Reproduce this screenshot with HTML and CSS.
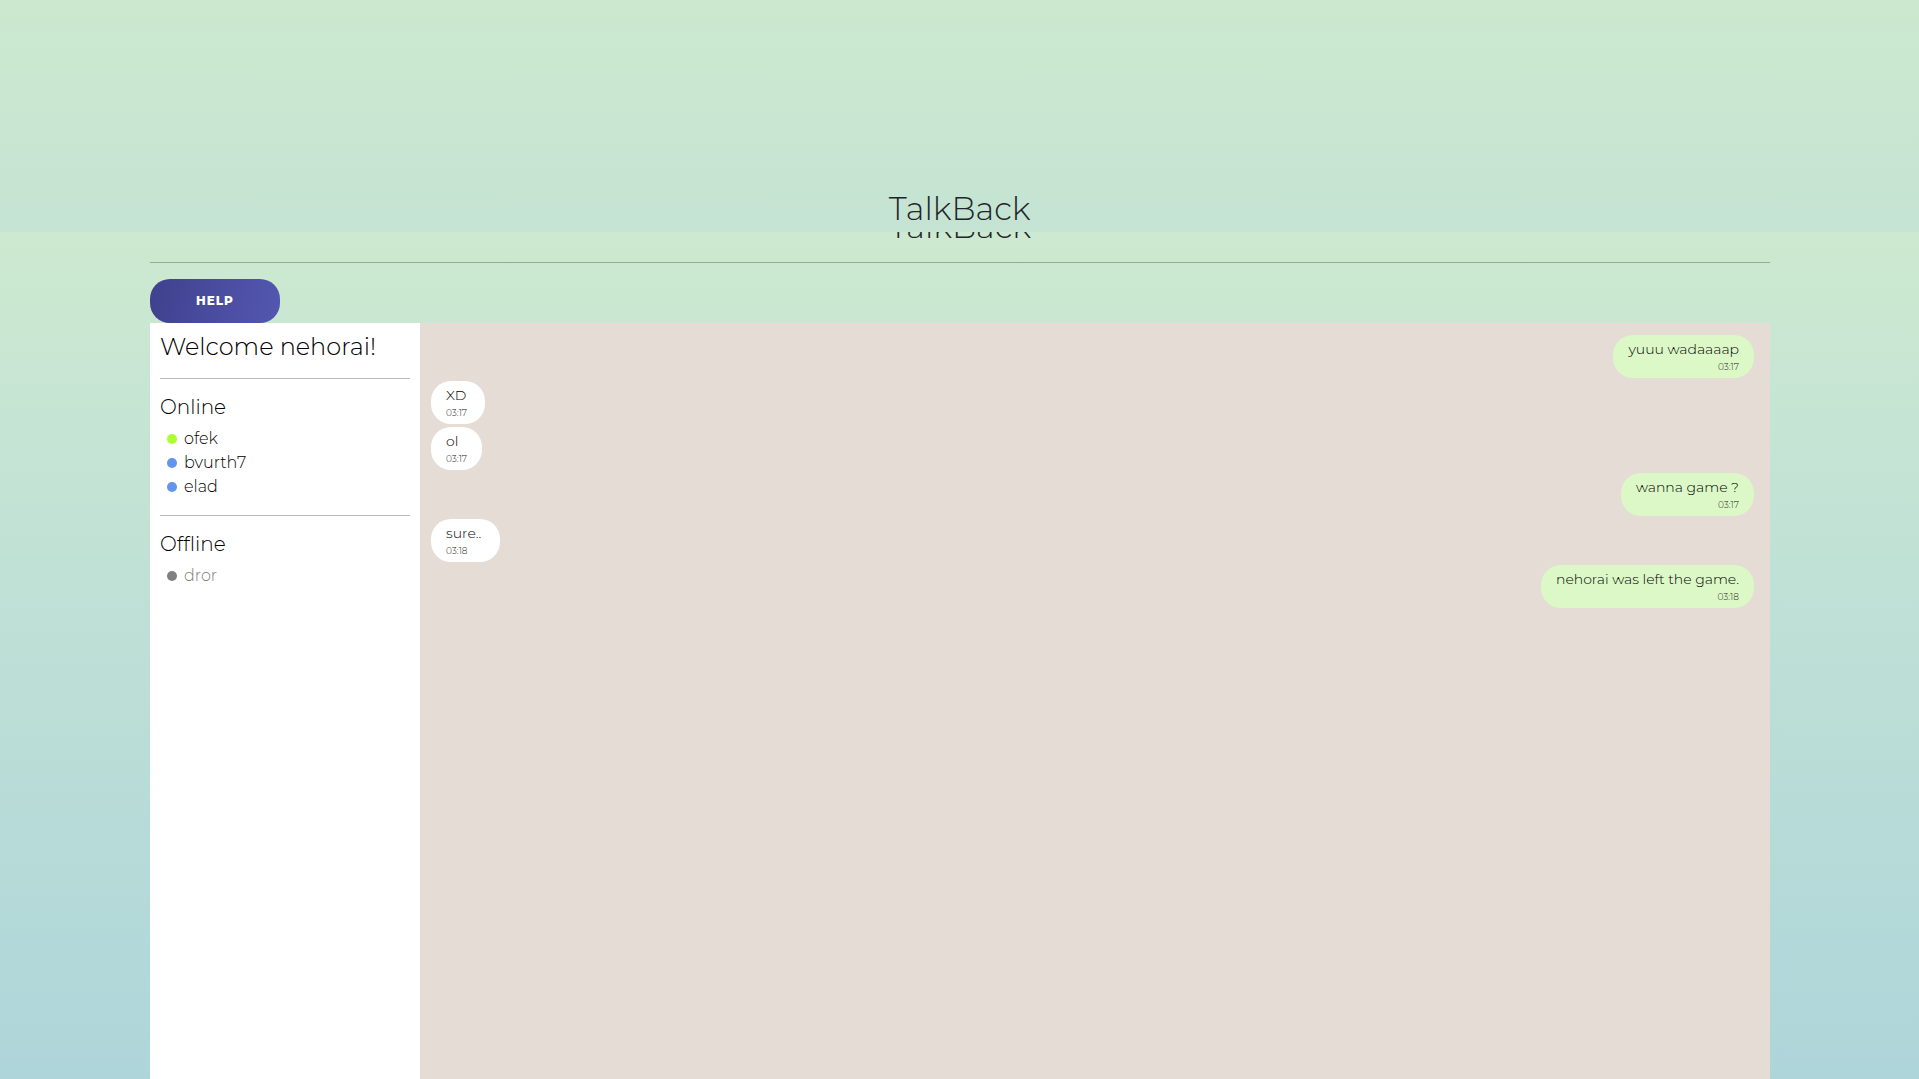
FILE: index.html
```html
<!DOCTYPE html>
<html lang="en">
<head>
<meta charset="utf-8">
<meta name="viewport" content="width=device-width, initial-scale=1">
<title>TalkBack</title>
<link rel="stylesheet" href="styles.css">
</head>
<body>
<header class="banner"><h1 class="title">TalkBack</h1></header>
<main class="page">
  <div class="title-echo" aria-hidden="true"><span class="title">TalkBack</span></div>
  <hr class="rule">
  <button class="help" type="button">Help</button>
  <div class="app">
    <aside class="sidebar">
      <h2 class="welcome">Welcome nehorai!</h2>
      <hr class="rule">
      <section>
        <h3 class="group">Online</h3>
        <ul class="users">
          <li class="user user-active">ofek</li>
          <li class="user">bvurth7</li>
          <li class="user">elad</li>
        </ul>
      </section>
      <hr class="rule">
      <section>
        <h3 class="group">Offline</h3>
        <ul class="users">
          <li class="user user-offline">dror</li>
        </ul>
      </section>
    </aside>
    <section class="chat" aria-label="Messages">
      <div class="message sent"><p class="text">yuuu wadaaaap</p><time class="time">03:17</time></div>
      <div class="message"><p class="text">XD</p><time class="time">03:17</time></div>
      <div class="message"><p class="text">ol</p><time class="time">03:17</time></div>
      <div class="message sent"><p class="text">wanna game ?</p><time class="time">03:17</time></div>
      <div class="message"><p class="text">sure..</p><time class="time">03:18</time></div>
      <div class="message sent"><p class="text">nehorai was left the game.</p><time class="time">03:18</time></div>
    </section>
  </div>
</main>
</body>
</html>
```

FILE: styles.css
```css
* { box-sizing: border-box; }

body {
  margin: 0;
  min-height: 100vh;
  display: flex;
  flex-direction: column;
  font-family: Montserrat, Inter, sans-serif;
  font-weight: 350;
  color: #000;
}

h1, h2, h3, p, ul { margin: 0; padding: 0; font-weight: inherit; }

.banner {
  display: flex;
  justify-content: center;
  padding: 190px 0 4px;
  background: linear-gradient(#cce9cf, #c5e3d3);
}

.title {
  font-size: 32px;
  line-height: 38px;
  color: #212529;
}

.page {
  flex: 1;
  display: flex;
  flex-direction: column;
  padding: 0 149px 0 150px;
  background: linear-gradient(#cde9cf, #c5e4d4 24%, #aed5da);
}

.title-echo {
  display: flex;
  justify-content: center;
  align-items: flex-end;
  height: 14px;
  overflow: hidden;
}

.rule {
  width: 100%;
  height: 1px;
  margin: 16px 0;
  border: 0;
  background: rgba(0, 0, 0, 0.27);
}

.help {
  align-self: flex-start;
  width: 130px;
  height: 44px;
  padding: 0 0 2px;
  border: 0;
  border-radius: 20px;
  background: linear-gradient(100deg, #3f418d, #5457b0);
  color: #fff;
  font-family: inherit;
  font-size: 12px;
  font-weight: 800;
  letter-spacing: 1px;
  text-transform: uppercase;
}

.app { flex: 1; display: flex; }

.sidebar {
  width: 270px;
  padding: 8px 10px;
  background: #fff;
}

.welcome { font-size: 24px; line-height: 31px; }
.group { font-size: 20px; line-height: 24px; }

.users { padding: 8px 0 0 7px; list-style: none; }

.user {
  display: flex;
  align-items: center;
  gap: 7px;
  font-size: 16px;
  line-height: 24px;
}

.user::before {
  content: "";
  width: 10px;
  height: 10px;
  border-radius: 50%;
  background: #6495ed;
}

.user-active::before { background: #adff2f; }
.user-offline { color: #808080; }
.user-offline::before { background: #808080; }

.chat {
  flex: 1;
  display: flex;
  flex-direction: column;
  align-items: flex-start;
  gap: 3px;
  padding: 12px 16px 12px 11px;
  background: #e5dcd6;
}

.message {
  display: flex;
  flex-direction: column;
  align-items: flex-start;
  gap: 2px;
  padding: 4px 15px 5px;
  border-radius: 20px;
  background: #fff;
}

.text {
  padding-right: 4px;
  font-size: 14px;
  line-height: 20px;
}

.time { font-size: 9px; line-height: 12px; color: #222; }

.sent {
  align-self: flex-end;
  align-items: flex-end;
  background: #dcf8c6;
}

.sent .text { padding-right: 0; }
```
